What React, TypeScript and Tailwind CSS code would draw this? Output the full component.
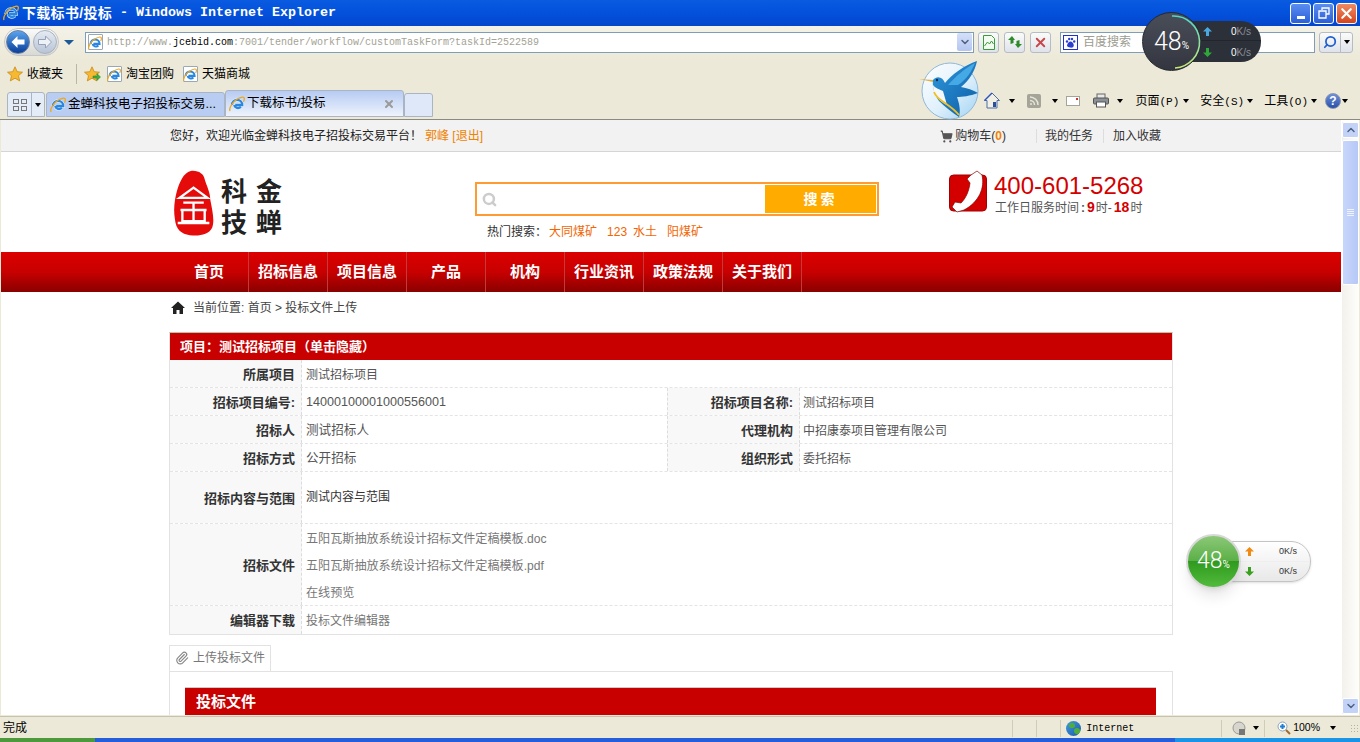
import { ChevronDown, ChevronUp, Paperclip, Search, ShoppingCart, X } from "lucide-react";

const CJK = "font-['Liberation_Sans','Noto_Sans_CJK_SC',sans-serif]";

const navItems = ["首页", "招标信息", "项目信息", "产品", "机构", "行业资讯", "政策法规", "关于我们"];

const IeIcon = ({ size = 16 }: { size?: number }) => (
  <svg width={size} height={size} viewBox="0 0 16 16" className="shrink-0">
    <path d="M3 9a5 5 0 1 1 10.200 0H6.200M5.400 9c.3 3.200 4.300 3.800 6.500 1.800" fill="none" stroke="#eaf6ff" strokeWidth="3.400" />
    <path d="M3 9a5 5 0 1 1 10.200 0H6.200M5.400 9c.3 3.200 4.300 3.800 6.500 1.800" fill="none" stroke="#2b86e0" strokeWidth="2.300" />
    <path d="M1 15C-.5 11 6 2.500 13.500 1.200c2.500-.3 2 2.500 1 4.500" fill="none" stroke="#eea81c" strokeWidth="1.300" />
  </svg>
);

const PageIe = () => (
  <div className="relative w-[15px] h-[16px] shrink-0 bg-white border border-[#9aa7b5] rounded-[1px]">
    <div className="absolute left-[-1px] top-[1px]">
      <IeIcon size={14} />
    </div>
  </div>
);

const Star = ({ add }: { add?: boolean }) => (
  <svg width="17" height="16" viewBox="0 0 17 16" className="shrink-0">
    <path d="M8 .8l2.200 4.900 5.300.5-4 3.500 1.200 5.200L8 12.200 3.300 14.900l1.200-5.200-4-3.500 5.300-.5z" fill="#f7b931" stroke="#c98a12" strokeWidth=".8" />
    {add && <path d="M9 10h4V7.500l3.500 3.500-3.500 3.500V12H9z" fill="#3fae3a" stroke="#2b7f29" strokeWidth=".5" />}
  </svg>
);

const Caret = ({ className = "" }: { className?: string }) => (
  <span className={`w-0 h-0 border-x-[3.5px] border-x-transparent border-t-[4px] border-t-black shrink-0 ${className}`} />
);

const GlassButton = ({ children, className = "" }: { children: React.ReactNode; className?: string }) => (
  <div className={`h-[21px] flex items-center justify-center rounded-[3px] border border-[#b5bcc6] bg-gradient-to-b from-[#fbfbf9] to-[#dfe3ea] ${className}`}>
    {children}
  </div>
);

// menu label: two hanzi, then the access key in the narrow mono face
const MenuLabel = ({ text, hotkey, className = "" }: { text: string; hotkey: string; className?: string }) => (
  <span className={`whitespace-pre ${className}`}>
    {text}
    <span className="text-[11px] font-['Liberation_Mono',monospace]">({hotkey})</span>
  </span>
);

const ArrowMark = ({ up, color }: { up?: boolean; color: string }) => (
  <svg width="9" height="9" viewBox="0 0 9 9" className={`shrink-0 ${up ? "" : "rotate-180"}`}>
    <path d="M4.500 0L9 4.500H6V9H3V4.500H0z" fill={color} />
  </svg>
);

const Row = ({ label, children, h = "h-[28px]", last }: { label: string; children: React.ReactNode; h?: string; last?: boolean }) => (
  <div className={`flex ${h} ${last ? "" : "border-b border-dashed border-[#e4e4e4]"}`}>
    <div className="w-[132px] shrink-0 pt-[2px] bg-[#f8f8f8] border-r border-dashed border-[#dcdcdc] flex items-center justify-end pr-[6px] text-[13px] font-bold text-[#333]">
      {label}
    </div>
    <div className="flex-1 min-w-0 pt-[2px] pl-[4px] text-[12px] text-[#555] flex items-center">{children}</div>
  </div>
);

const SplitRow = ({ a, b, c, d }: { a: string; b: string; c: string; d: string }) => (
  <div className="flex h-[28px] border-b border-dashed border-[#e4e4e4]">
    <div className="w-[132px] shrink-0 pt-[2px] bg-[#f8f8f8] border-r border-dashed border-[#dcdcdc] flex items-center justify-end pr-[6px] text-[13px] font-bold text-[#333]">
      {a}
    </div>
    <div className="w-[365px] shrink-0 pt-[2px] pl-[4px] text-[12.600px] text-[#555] flex items-center">{b}</div>
    <div className="w-[133px] shrink-0 pt-[2px] bg-[#f8f8f8] border-x border-dashed border-[#dcdcdc] flex items-center justify-end pr-[6px] text-[13px] font-bold text-[#333]">
      {c}
    </div>
    <div className="flex-1 pt-[2px] pl-[3px] text-[12px] text-[#555] flex items-center">{d}</div>
  </div>
);

export default function App() {
  return (
    <div className={`relative w-[1360px] h-[742px] overflow-hidden flex flex-col bg-[#ece9d8] ${CJK}`}>
      {/* title bar */}
      <div className="h-[26px] shrink-0 flex items-center pl-[3px] pr-[3px] bg-gradient-to-b from-[#0a5be0] via-[#0451dc] to-[#0345cc] text-white">
        <IeIcon size={16} />
        <span className="ml-[3px] text-[14px] font-bold whitespace-pre tracking-[.3px]">下载标书/投标</span>
        <span className="text-[13.340px] font-bold whitespace-pre font-['Liberation_Mono',monospace]"> - Windows Internet Explorer</span>
        <div className="ml-auto flex gap-[2px]">
          <div className="w-[21px] h-[21px] rounded-[3px] border border-white bg-gradient-to-b from-[#5b8df0] to-[#2a5fd8] flex items-end justify-center pb-[4px]">
            <div className="w-[8px] h-[3px] bg-white" />
          </div>
          <div className="w-[21px] h-[21px] rounded-[3px] border border-white bg-gradient-to-b from-[#5b8df0] to-[#2a5fd8] flex items-center justify-center">
            <svg width="12" height="12" viewBox="0 0 12 12" fill="none" stroke="#fff" strokeWidth="1.300">
              <path d="M4 3V1h7v6H8.500M1 4h7v7H1z" />
            </svg>
          </div>
          <div className="w-[21px] h-[21px] rounded-[3px] border border-white bg-gradient-to-b from-[#ee8a62] to-[#d5431a] flex items-center justify-center">
            <X size={17} strokeWidth={3} color="#fff" />
          </div>
        </div>
      </div>

      {/* address row */}
      <div className="h-[34px] shrink-0 flex items-center pb-[2px] bg-gradient-to-b from-[#f4f2e8] to-[#ece9d8]">
        <div className="ml-[4px] flex items-center rounded-full bg-gradient-to-b from-[#fafafa] to-[#d8d8d4] border border-[#c4c6c8] p-px">
          <div className="w-[24px] h-[24px] rounded-full bg-gradient-to-b from-[#5aa4ee] to-[#0b3f9a] border border-[#6b7f9c] flex items-center justify-center">
            <svg width="16" height="14" viewBox="0 0 16 14">
              <path d="M7.500 1L1.500 7l6 6V9.500h7v-5h-7z" fill="#fff" />
            </svg>
          </div>
          <div className="ml-[3px] w-[24px] h-[24px] rounded-full bg-gradient-to-b from-[#e6ebf2] to-[#b8c4d6] border border-[#a8b1bf] flex items-center justify-center">
            <svg width="16" height="14" viewBox="0 0 16 14">
              <path d="M8.500 1l6 6-6 6V9.500h-7v-5h7z" fill="#eef1f6" stroke="#94a2b8" />
            </svg>
          </div>
        </div>
        <span className="ml-[5px] w-0 h-0 border-x-[5px] border-x-transparent border-t-[5px] border-t-[#1c5a96]" />
        <div className="ml-[11px] w-[889px] h-[21px] bg-white border border-[#7f9db9] flex items-center pl-[2px]">
          <PageIe />
          <span className="ml-[4px] text-[10px] text-[#a3a394] font-['Liberation_Mono',monospace]">
            http://www.<span className="text-black">jcebid.com</span>:7001/tender/workflow/customTaskForm?taskId=2522589
          </span>
          <div className="ml-auto w-[15px] h-[18px] mr-[1px] rounded-[2px] bg-gradient-to-b from-[#d5dff8] to-[#b4c6f0] flex items-center justify-center">
            <ChevronDown size={12} strokeWidth={3} color="#4d6185" />
          </div>
        </div>
        <GlassButton className="ml-[4px] w-[21px]">
          <svg width="14" height="15" viewBox="0 0 14 15">
            <path d="M1.500.5h8l3 3v11h-11z" fill="#f2fbef" stroke="#3b9a3b" />
            <path d="M2.500 11l3-4 2 2 2-3 2 3" fill="none" stroke="#3b9a3b" />
          </svg>
        </GlassButton>
        <GlassButton className="ml-[5px] w-[21px]">
          <svg width="16" height="14" viewBox="0 0 16 14">
            <path d="M5 1L1 5h2.500v4l3-1V5H8zM11 13l4-4h-2.500V5l-3 1v3H8z" fill="#2f8a2a" />
          </svg>
        </GlassButton>
        <GlassButton className="ml-[5px] w-[21px]">
          <X size={15} strokeWidth={3} color="#c8464a" />
        </GlassButton>
        <div className="ml-[9px] w-[255px] h-[21px] bg-white border border-[#7f9db9] flex items-center pl-[2px]">
          <div className="w-[15px] h-[15px] border border-[#2233cc] flex items-center justify-center">
            <svg width="11" height="11" viewBox="0 0 11 11" fill="#2a3fd0">
              <circle cx="2" cy="4.500" r="1.200" />
              <circle cx="4.200" cy="2" r="1.200" />
              <circle cx="7" cy="2" r="1.200" />
              <circle cx="9.200" cy="4.500" r="1.200" />
              <path d="M5.500 4.500c2 0 4 3 3 5s-4.500 1-6 0 1-5 3-5z" />
            </svg>
          </div>
          <span className="ml-[5px] text-[12px] text-[#9c9c90]">百度搜索</span>
        </div>
        <div className="ml-[4px] w-[34px] h-[21px] flex rounded-[3px] border border-[#b5bcc6] bg-gradient-to-b from-[#fbfbf9] to-[#dfe3ea]">
          <div className="w-[21px] flex items-center justify-center border-r border-[#b5bcc6]">
            <Search size={14} strokeWidth={3} color="#1f5fd0" className="-scale-x-100" />
          </div>
          <div className="flex-1 flex items-center justify-center">
            <Caret className="border-t-[#1f5fd0]" />
          </div>
        </div>
      </div>

      {/* favorites row */}
      <div className="h-[28px] shrink-0 flex items-center text-[12px] text-black pl-[7px]">
        <Star />
        <span className="ml-[3px]">收藏夹</span>
        <div className="ml-[13px] w-px h-[20px] bg-[#b8b6a6]" />
        <div className="ml-[7px]">
          <Star add />
        </div>
        <div className="ml-[6px]">
          <PageIe />
        </div>
        <span className="ml-[4px]">淘宝团购</span>
        <div className="ml-[9px]">
          <PageIe />
        </div>
        <span className="ml-[4px]">天猫商城</span>
      </div>

      {/* tabs + command bar */}
      <div className="h-[32px] shrink-0 flex items-end pl-[7px] border-b border-[#8a8a80] text-[12px] text-black">
        <div className="h-[25px] w-[38px] mb-[2px] flex rounded-t-[3px] border border-[#a9b4c4] bg-[#e4ecf8]">
          <div className="w-[24px] border-r border-[#a9b4c4] flex items-center justify-center">
            <div className="grid grid-cols-2 gap-[2px]">
              <div className="w-[6px] h-[5px] border border-[#777]" />
              <div className="w-[6px] h-[5px] border border-[#777]" />
              <div className="w-[6px] h-[5px] border border-[#777]" />
              <div className="w-[6px] h-[5px] border border-[#777]" />
            </div>
          </div>
          <div className="flex-1 flex items-center justify-center">
            <Caret />
          </div>
        </div>
        <div className="h-[25px] w-[179px] mb-[2px] ml-px flex items-center pl-[3px] rounded-t-[3px] border border-[#a9b4c4] bg-[#b9cdf3]">
          <IeIcon size={16} />
          <span className="ml-[2px] whitespace-nowrap text-[12.500px]">金蝉科技电子招投标交易...</span>
        </div>
        <div className="h-[27px] w-[179px] mb-[2px] flex items-center pl-[3px] pr-[5px] rounded-t-[3px] border border-[#a9b4c4] bg-gradient-to-b from-[#b7cbf2] to-[#eef3fc]">
          <IeIcon size={16} />
          <span className="ml-[2px] text-[12.500px]">下载标书/投标</span>
          <X size={12} strokeWidth={4} color="#9a9a9a" className="ml-auto mr-[3px]" />
        </div>
        <div className="h-[24px] w-[29px] mb-[2px] rounded-t-[3px] border border-[#a9b4c4] bg-[#dfe8f8]" />
        <div className="ml-auto mb-[9px] pr-[12px] flex items-center">
          <svg width="16" height="17" viewBox="0 0 16 17">
            <path d="M8 1L.5 8.500H3V16h10V8.500h2.500z" fill="#f2efe4" stroke="#4b6fa8" />
            <path d="M8 1L.5 8.500" stroke="#2a55c0" strokeWidth="1.500" />
            <rect x="9" y="10" width="3" height="5" fill="#2c4f9a" />
          </svg>
          <Caret className="ml-[9px]" />
          <div className="ml-[12px] w-[14px] h-[14px] rounded-[2px] bg-[#a5a498] flex items-center justify-center">
            <svg width="10" height="10" viewBox="0 0 10 10" fill="none" stroke="#e8e6da" strokeWidth="1.500">
              <path d="M1 1a8 8 0 0 1 8 8M1 4.500A4.500 4.500 0 0 1 5.500 9" />
              <circle cx="2" cy="8" r="1" fill="#e8e6da" stroke="none" />
            </svg>
          </div>
          <Caret className="ml-[11px] border-t-[#bdbbb0]" />
          <div className="ml-[8px] relative w-[14px] h-[10px] bg-white border border-[#a5a498]">
            <div className="absolute right-[1px] top-[1px] w-[2px] h-[2px] bg-[#d03030]" />
          </div>
          <svg width="16" height="15" viewBox="0 0 16 15" className="ml-[13px]">
            <rect x="4" y="1" width="8" height="5" fill="#e8e8e8" stroke="#666" />
            <rect x=".5" y="5" width="15" height="6" rx="1" fill="#8b9096" stroke="#555" />
            <rect x="3.500" y="9" width="9" height="5" fill="#fff" stroke="#555" />
          </svg>
          <Caret className="ml-[8px]" />
          <MenuLabel text="页面" hotkey="P" className="ml-[12px]" />
          <Caret className="ml-[4px]" />
          <MenuLabel text="安全" hotkey="S" className="ml-[11px]" />
          <Caret className="ml-[3px]" />
          <MenuLabel text="工具" hotkey="O" className="ml-[11px]" />
          <Caret className="ml-[3px]" />
          <div className="ml-[8px] w-[16px] h-[16px] rounded-full bg-gradient-to-b from-[#6f8fd8] to-[#2a4fa8] border border-[#8a96b0] flex items-center justify-center text-white text-[12px] font-bold leading-none">
            ?
          </div>
          <Caret className="ml-[1px]" />
        </div>
      </div>

      {/* page viewport */}
      <div className="h-[595px] shrink-0 mx-px flex bg-white overflow-hidden">
        <div className="w-[1340px] shrink-0 overflow-hidden">
          <div className="h-[32px] bg-[#f2f2f2] border-b border-[#d5d5d5] text-[12px]">
            <div className="w-[1002px] ml-[169px] h-full flex items-center pt-[1px]">
              <span className="text-[#222]">您好，欢迎光临金蝉科技电子招投标交易平台！</span>
              <span className="ml-[3px] text-[#f08300]">郭峰 [退出]</span>
              <ShoppingCart size={13} color="#555" fill="#555" className="ml-auto" />
              <span className="ml-[2px] text-[#333]">
                购物车(<b className="text-[#f08300]">0</b>)
              </span>
              <div className="ml-[30px] w-px h-[14px] bg-[#ddd]" />
              <span className="ml-[8px] text-[#333]">我的任务</span>
              <div className="ml-[10px] w-px h-[14px] bg-[#ddd]" />
              <span className="ml-[9px] mr-[11px] text-[#333]">加入收藏</span>
            </div>
          </div>

          {/* logo, search, phone */}
          <div className="h-[100px] flex">
            <div className="ml-[173px] mt-[16px] flex items-start">
              <svg width="40" height="71" viewBox="0 0 43 70" className="shrink-0">
                <path d="M18 0c8-1 14 3 15 9 2 7 6 14 6 22 2 11 5 22 2 30-4 8-14 9-24 8C8 68 2 63 1 52-1 40 1 30 3 22 6 12 10 2 18 0z" fill="#e60b0b" />
                <path d="M21 18L6 29h30zM10 34h22M7 42h28M9 42v12h24V42M21 34v20M4 56h34" fill="none" stroke="#fff" strokeWidth="2.500" />
              </svg>
              <div className="ml-[7px] mt-[9px] grid grid-cols-[27px_27px] auto-rows-[30px] gap-x-[8px] gap-y-[1px] text-[26px] leading-[30px] font-bold text-[#222]">
                <span className="h-[30px] overflow-hidden">科</span>
                <span className="h-[30px] overflow-hidden">金</span>
                <span className="h-[30px] overflow-hidden">技</span>
                <span className="h-[30px] overflow-hidden">蝉</span>
              </div>
            </div>
            <div className="ml-[192px] mt-[30px]">
              <div className="w-[404px] h-[34px] border-[2px] border-[#ff9b33] flex items-center p-[1px]">
                <Search size={15} strokeWidth={4} color="#cccccc" className="ml-[4px]" />
                <div className="ml-auto w-[111px] h-full bg-[#ffab00] flex items-center justify-center text-white text-[14px] font-bold tracking-[3px]">
                  搜索
                </div>
              </div>
              <div className="mt-[7px] ml-[12px] text-[12px] text-[#333] flex">
                <span>热门搜索：</span>
                <span className="ml-[2px] text-[#f26500]">大同煤矿</span>
                <span className="ml-[10px] text-[#f26500]">123</span>
                <span className="ml-[6px] text-[#f26500]">水土</span>
                <span className="ml-[10px] text-[#f26500]">阳煤矿</span>
              </div>
            </div>
            <div className="ml-[70px] mt-[18px] flex items-start">
              <svg width="40" height="44" viewBox="0 0 40 44" className="shrink-0">
                <rect x=".5" y="5" width="37" height="36" rx="4" fill="#d40000" stroke="#a00000" />
                <path d="M22 5l6-4 5 4c3 13-3 27-18 35l-7 2-5-5 3-5 6 1c5-5 8-12 9-20l-3-4z" fill="#fff" stroke="#8a0000" strokeWidth=".7" />
              </svg>
              <div className="ml-[5px] mt-[3px]">
                <div className="text-[24px] leading-[26px] text-[#d40000] font-['Liberation_Sans',sans-serif]">400-601-5268</div>
                <div className="flex items-baseline text-[12px] leading-[15px] text-[#555] whitespace-pre mt-[1px] ml-[1px]">
                  <span>工作日服务时间</span>
                  <b className="mx-[2px]">:</b>
                  <b className="text-[#d40000] text-[14px]">9</b>
                  <span className="ml-px">时-</span>
                  <b className="ml-[2px] text-[#d40000] text-[14px]">18</b>
                  <span className="ml-px">时</span>
                </div>
              </div>
            </div>
          </div>

          {/* nav */}
          <div className="h-[40px] bg-gradient-to-b from-[#dc0000] via-[#c80000] to-[#8a0000]">
            <div className="ml-[169px] flex h-full">
              {navItems.map((item) => (
                <div key={item} className="w-[79px] h-full flex items-center justify-center border-r border-[#c23a3a] text-white text-[15px] font-bold">
                  {item}
                </div>
              ))}
            </div>
          </div>

          {/* breadcrumb */}
          <div className="h-[40px] ml-[170px] pt-[7px] flex items-start text-[12px] text-[#444]">
            <svg width="14" height="13" viewBox="0 0 14 13" className="mt-[2px]">
              <path d="M7 .5L0 7h2v6h3.500V9h3v4H12V7h2z" fill="#222" />
            </svg>
            <span className="ml-[8px]">当前位置: 首页 &gt; 投标文件上传</span>
          </div>

          <div className="ml-[168px] w-[1004px]">
            {/* project table */}
            <div className="border border-[#e2e2e2] border-t-[#b8c4a8]">
              <div className="h-[27px] bg-[#c80000] flex items-center pl-[10px] text-white text-[13px] font-bold">
                项目：测试招标项目（单击隐藏）
              </div>
              <Row label="所属项目">测试招标项目</Row>
              <SplitRow a="招标项目编号:" b="14000100001000556001" c="招标项目名称:" d="测试招标项目" />
              <SplitRow a="招标人" b="测试招标人" c="代理机构" d="中招康泰项目管理有限公司" />
              <SplitRow a="招标方式" b="公开招标" c="组织形式" d="委托招标" />
              <Row label="招标内容与范围" h="h-[52px]">
                <span className="-mt-[4px] text-[#333]">测试内容与范围</span>
              </Row>
              <Row label="招标文件" h="h-[82px]">
                <div className="flex flex-col gap-[10px] mt-[2px] text-[#777] text-[12.100px]">
                  <span className="leading-[17px]">五阳瓦斯抽放系统设计招标文件定稿模板.doc</span>
                  <span className="leading-[17px]">五阳瓦斯抽放系统设计招标文件定稿模板.pdf</span>
                  <span className="leading-[17px]">在线预览</span>
                </div>
              </Row>
              <Row label="编辑器下载" last>
                <span className="text-[#777]">投标文件编辑器</span>
              </Row>
            </div>

            {/* upload tab */}
            <div className="mt-[10px] w-[102px] h-[27px] border border-[#e2e2e2] flex items-center pl-[5px] pb-[2px] text-[12px] text-[#777] relative z-10 bg-white">
              <Paperclip size={14} color="#888" />
              <span className="ml-[4px]">上传投标文件</span>
            </div>
            <div className="-mt-px border border-[#e2e2e2] px-[15px] pt-[15px] h-[200px]">
              <div className="w-[971px] h-[28px] pt-[2px] bg-[#c80000] border-t border-[#ccc] flex items-center pl-[11px] text-white text-[15px] font-bold">
                投标文件
              </div>
            </div>
          </div>
        </div>

        {/* scrollbar */}
        <div className="w-[17px] ml-auto shrink-0 mt-[2px] mb-[1px] flex flex-col bg-gradient-to-r from-[#f3f1ec] to-[#fefefb]">
          <div className="h-[16px] rounded-[2px] border border-white bg-[#c3d3f8] flex items-center justify-center">
            <ChevronUp size={12} strokeWidth={3} color="#4d6185" />
          </div>
          <div className="mt-[2px] h-[145px] rounded-[2px] border border-white bg-gradient-to-r from-[#c8d6fb] to-[#b6c8f6] flex flex-col gap-px items-center justify-center">
            <div className="w-[7px] h-px bg-[#eef3ff]" />
            <div className="w-[7px] h-px bg-[#eef3ff]" />
            <div className="w-[7px] h-px bg-[#eef3ff]" />
            <div className="w-[7px] h-px bg-[#eef3ff]" />
          </div>
          <div className="mt-auto h-[16px] rounded-[2px] border border-white bg-[#c3d3f8] flex items-center justify-center">
            <ChevronDown size={12} strokeWidth={3} color="#4d6185" />
          </div>
        </div>
      </div>

      {/* status bar */}
      <div className="h-[22px] shrink-0 mt-px pt-px flex items-center text-[12px] text-black bg-[#ece9d8] border-t border-[#c5c2b0]">
        <span className="ml-[3px]">完成</span>
        <div className="ml-auto w-px h-[17px] bg-[#cfccb9]" />
        <div className="ml-[23px] w-px h-[17px] bg-[#cfccb9]" />
        <div className="ml-[23px] w-px h-[17px] bg-[#cfccb9]" />
        <div className="ml-[5px] w-[15px] h-[15px] rounded-full bg-gradient-to-br from-[#3f9ae0] to-[#1f5aa8] relative overflow-hidden">
          <div className="absolute left-[3px] top-[2px] w-[6px] h-[5px] rounded-full bg-[#4fae3a]" />
          <div className="absolute right-[1px] bottom-[2px] w-[6px] h-[6px] rounded-full bg-[#4fae3a]" />
        </div>
        <span className="ml-[5px] w-[135px] text-[10px] font-['Liberation_Mono',monospace]">Internet</span>
        <div className="w-px h-[17px] bg-[#cfccb9]" />
        <svg width="14" height="15" viewBox="0 0 14 15" className="ml-[10px]">
          <circle cx="7" cy="7" r="6" fill="#d8d6cc" stroke="#999" />
          <rect x="7" y="8" width="6" height="6" fill="#777" />
        </svg>
        <Caret className="ml-[7px]" />
        <div className="ml-[5px] w-px h-[17px] bg-[#cfccb9]" />
        <svg width="14" height="14" viewBox="0 0 14 14" className="ml-[12px]">
          <circle cx="5.500" cy="5.500" r="4.500" fill="#fff" stroke="#8aa0c0" />
          <path d="M3 5.500h5M5.500 3v5" stroke="#1f7fd0" strokeWidth="2" />
          <path d="M9 9l4 4" stroke="#a06a30" strokeWidth="2" />
        </svg>
        <span className="ml-[2px] text-[10.500px]">100%</span>
        <Caret className="ml-[10px]" />
        <div className="ml-[14px] mr-[2px] w-[8px] h-[8px] bg-[radial-gradient(#b5b2a0_1px,transparent_1px)] bg-[length:3px_3px]" />
      </div>

      {/* taskbar sliver */}
      <div className="h-[4px] shrink-0 flex">
        <div className="w-[95px] bg-[#4c9a3c]" />
        <div className="flex-1 bg-[#245edb]" />
        <div className="w-[185px] bg-[#1a94e6]" />
      </div>

      {/* bird badge */}
      <svg width="70" height="70" viewBox="0 0 70 70" className="absolute left-[915px] top-[55px]">
        <defs>
          <linearGradient id="birdDisc" x1="0" y1="0" x2="1" y2="1">
            <stop offset="0" stopColor="#ffffff" />
            <stop offset="0.55" stopColor="#dff0fb" />
            <stop offset="1" stopColor="#9fd2f2" />
          </linearGradient>
          <linearGradient id="birdBody" x1="0" y1="0" x2="1" y2="1">
            <stop offset="0" stopColor="#2f97dc" />
            <stop offset="1" stopColor="#0d5ea6" />
          </linearGradient>
        </defs>
        <circle cx="35" cy="36" r="28" fill="url(#birdDisc)" stroke="#8fb8dc" />
        <path d="M18 25c4-5 10-3 12 3C36 20 50 10 62 6c-2 10-8 20-16 26 6 1 12 3 17 6-8 3-16 4-21 4 2 6 4 13 2 20-6-4-14-10-20-16-4-6-7-14-6-21z" fill="url(#birdBody)" />
        <path d="M33 30C40 22 50 13 60 8c-3 8-9 17-17 22z" fill="#45a9e6" />
        <path d="M18 30c0 10 6 16 14 20l-4-14c-4-2-8-3-10-6z" fill="#f4f8fb" />
        <path d="M19 37c3 9 15 11 25 23" fill="none" stroke="#f0c020" strokeWidth="1.800" />
        <path d="M4 24l14 1v2z" fill="#e0b040" />
        <circle cx="22" cy="25" r="1.200" fill="#0a2a50" />
      </svg>

      {/* dark speed widget */}
      <div className="absolute left-[1190px] top-[21px] w-[71px] h-[41px] rounded-r-[20px] bg-[#2c3038] text-[10px] text-[#8a8e98] flex flex-col">
        <div className="h-[20px] flex items-center border-b border-[#22252b] pl-[13px] pt-[2px]">
          <ArrowMark up color="#4aa8e0" />
          <span className="ml-auto mr-[10px]"><span className="text-white">0</span>K/s</span>
        </div>
        <div className="flex-1 flex items-center pl-[13px] pt-[2px]">
          <ArrowMark color="#2fa83a" />
          <span className="ml-auto mr-[10px]"><span className="text-white">0</span>K/s</span>
        </div>
      </div>
      <div className="absolute left-[1142px] top-[12px] w-[59px] h-[59px] rounded-full bg-gradient-to-b from-[#4a4e59] to-[#33363f] border border-[#25272e] flex items-center justify-center text-white font-['Roboto',sans-serif]">
        <span className="text-[25px] font-light">48</span>
        <span className="text-[10px] mt-[8px]">%</span>
        <svg width="59" height="59" viewBox="0 0 59 59" className="absolute inset-0">
          <defs>
            <linearGradient id="dialArc" x1="0" y1="0" x2="0" y2="1">
              <stop offset="0" stopColor="#4fd8c8" />
              <stop offset="1" stopColor="#c8e878" />
            </linearGradient>
          </defs>
          <path d="M29 3a26 26 0 0 1 3 52" fill="none" stroke="url(#dialArc)" strokeWidth="1.600" />
        </svg>
      </div>

      {/* green speed widget */}
      <div className="absolute left-[1225px] top-[541px] w-[86px] h-[41px] rounded-r-[20px] border border-[#c4c4c4] bg-gradient-to-b from-white to-[#e8e8e8] shadow-sm text-[9px] text-[#333] flex flex-col">
        <div className="h-[20px] flex items-center border-b border-[#eee] pl-[19px]">
          <ArrowMark up color="#f08a10" />
          <span className="ml-auto mr-[13px]">0K/s</span>
        </div>
        <div className="flex-1 flex items-center pl-[19px]">
          <ArrowMark color="#3aa020" />
          <span className="ml-auto mr-[13px]">0K/s</span>
        </div>
      </div>
      <div className="absolute left-[1186px] top-[534px] w-[55px] h-[55px] rounded-full border-2 border-[#d8d8d8] bg-[linear-gradient(#8cc878_0%,#5cb048_48%,#2f9a1e_50%,#52bb3c_100%)] shadow-lg flex items-center justify-center text-white font-['Roboto',sans-serif]">
        <span className="text-[23px] font-light">48</span>
        <span className="text-[10px] mt-[6px]">%</span>
      </div>
    </div>
  );
}
